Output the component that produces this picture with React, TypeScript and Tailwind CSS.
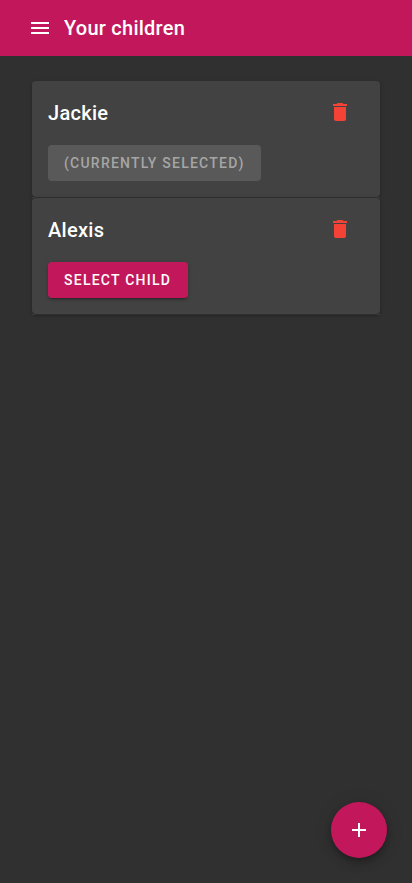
import React from "react";

function DeleteIcon() {
  return (
    <svg viewBox="0 0 24 24" className="size-6 fill-[#f44336]">
      <path d="M19,4H15.5L14.5,3H9.5L8.5,4H5V6H19M6,19A2,2 0 0,0 8,21H16A2,2 0 0,0 18,19V7H6V19Z" />
    </svg>
  );
}

function ChildCard({ name, selected }: { name: string; selected?: boolean }) {
  return (
    <div className="border-b border-white/12">
      <section className="h-[116px] rounded bg-[#424242] px-4 shadow-[0_3px_1px_-2px_rgba(0,0,0,0.2),0_2px_2px_0_rgba(0,0,0,0.14),0_1px_5px_0_rgba(0,0,0,0.12)]">
        <div className="flex h-16 items-center justify-between pr-3">
          <h2 className="text-xl font-medium leading-8 tracking-[0.3px] text-white">{name}</h2>
          <button aria-label={`Delete ${name}`} className="mb-0.5">
            <DeleteIcon />
          </button>
        </div>
        {selected ? (
          <button disabled className="h-9 w-[213px] rounded bg-[#595959] pl-4 text-left text-sm font-medium uppercase tracking-[1.23px] text-[#a6a6a6]">
            (Currently selected)
          </button>
        ) : (
          <button className="h-9 w-[140px] rounded bg-[#c2185b] pl-4 text-left text-sm font-medium uppercase tracking-[1.25px] text-white shadow-[0_3px_1px_-2px_rgba(0,0,0,0.2),0_2px_2px_0_rgba(0,0,0,0.14),0_1px_5px_0_rgba(0,0,0,0.12)]">
            Select child
          </button>
        )}
      </section>
    </div>
  );
}

export default function App() {
  return (
    <div className="relative flex h-[883px] flex-col bg-[#303030] font-[Roboto,sans-serif]">
      <header className="flex h-14 items-center gap-3 bg-[#c2185b] pl-7 text-white">
        <svg viewBox="0 0 24 24" className="size-6 fill-current">
          <path d="M3,6H21V8H3V6M3,11H21V13H3V11M3,16H21V18H3V16Z" />
        </svg>
        <h1 className="text-xl font-medium tracking-[0.25px]">Your children</h1>
      </header>
      <main className="flex flex-col px-8 pt-[25px]">
        <ChildCard name="Jackie" selected />
        <ChildCard name="Alexis" />
      </main>
      <button
        aria-label="Add child"
        className="absolute right-[25px] bottom-[25px] flex size-14 items-center justify-center rounded-full bg-[#c2185b] text-white shadow-[0_3px_5px_-1px_rgba(0,0,0,0.2),0_6px_10px_0_rgba(0,0,0,0.14),0_1px_18px_0_rgba(0,0,0,0.12)]"
      >
        <svg viewBox="0 0 24 24" className="size-6 fill-current">
          <path d="M19,13H13V19H11V13H5V11H11V5H13V11H19V13Z" />
        </svg>
      </button>
    </div>
  );
}
